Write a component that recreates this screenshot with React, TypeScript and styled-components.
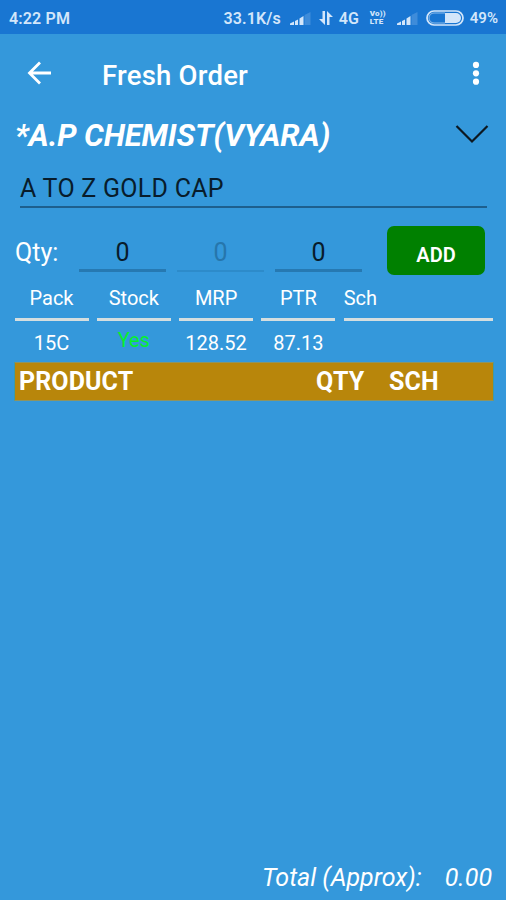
import React from "react";
import styled, { createGlobalStyle } from "styled-components";

const GlobalStyle = createGlobalStyle`
  * { box-sizing: border-box; }
  body { margin: 0; background: #3498db; }
`;

const Screen = styled.main`
  width: 506px;
  height: 900px;
  display: flex;
  flex-direction: column;
  overflow: hidden;
  background: #3498db;
  color: #fff;
  font-family: Roboto, "Liberation Sans", sans-serif;
  white-space: nowrap;
`;

const StatusBar = styled.header`
  height: 34px;
  flex: none;
  display: flex;
  align-items: center;
  padding: 2px 8px 0 9px;
  background: #1976d2;
  color: #d3e6fa;
  font-size: 16px;
  font-weight: 600;
`;

const StatusText = styled.span<{ $gap?: number; $spacing?: number; $size?: number }>`
  margin-left: ${(p) => p.$gap ?? 0}px;
  letter-spacing: ${(p) => p.$spacing ?? 0}px;
  font-size: ${(p) => p.$size ?? 16}px;
`;

const Spacer = styled.div`
  flex: 1;
`;

const StatusIcon = styled.svg<{ $gap: number }>`
  flex: none;
  margin-left: ${(p) => p.$gap}px;
`;

const VolteBadge = styled.span`
  display: flex;
  flex-direction: column;
  width: 17px;
  margin-left: 11px;
  font-size: 8px;
  line-height: 8px;
  font-weight: 900;
  letter-spacing: 0.2px;
`;

const AppBar = styled.div`
  height: 78px;
  flex: none;
  display: flex;
  align-items: center;
  padding: 0 24px 0 27px;
`;

const Title = styled.h1`
  flex: 1;
  margin: 5px 0 0 51px;
  font-size: 27.5px;
  font-weight: 500;
  letter-spacing: 0.22px;
`;

const CustomerRow = styled.div`
  height: 46px;
  flex: none;
  display: flex;
  align-items: center;
  justify-content: space-between;
  padding: 0 17px 0 15px;
`;

const CustomerName = styled.h2`
  margin: 0;
  font-size: 31px;
  font-weight: 700;
  font-style: italic;
  letter-spacing: -0.1px;
`;

const ProductField = styled.div`
  height: 50px;
  flex: none;
  margin: 0 19px 0 20px;
  padding-top: 16px;
  border-bottom: 2px solid #1d5f8e;
  color: #081c2b;
  font-size: 25px;
  line-height: 30px;
  letter-spacing: 0.27px;
`;

const QuantityRow = styled.div`
  height: 71px;
  flex: none;
  display: flex;
  padding: 18px 21px 0 15px;
`;

const QuantityLabel = styled.span`
  width: 64px;
  padding-top: 12px;
  font-size: 25px;
  line-height: 30px;
`;

const QuantityInput = styled.span<{ $muted?: boolean }>`
  width: 87px;
  height: 46px;
  margin-right: 11px;
  padding-top: 12px;
  border-bottom: ${(p) => (p.$muted ? "2px solid #2d8bca" : "3px solid #2679b2")};
  color: ${(p) => (p.$muted ? "#2676ac" : "#081c2b")};
  font-size: 25px;
  line-height: 30px;
  text-align: center;
`;

const AddButton = styled.button`
  width: 98px;
  height: 49px;
  margin-left: auto;
  padding: 8px 0 0;
  border: 0;
  border-radius: 7px;
  background: #008000;
  color: #fff;
  font: 600 20px Roboto, "Liberation Sans", sans-serif;
`;

const DetailGrid = styled.div`
  height: 83px;
  flex: none;
  display: grid;
  grid-template-columns: 74px 74px 74px 74px 149px;
  grid-template-rows: 42px 41px;
  column-gap: 8.3px;
  padding-left: 14.5px;
`;

const DetailHead = styled.div<{ $left?: boolean }>`
  padding-top: 7px;
  border-bottom: 3px solid #d5dedf;
  font-size: 20px;
  line-height: 24px;
  text-align: ${(p) => (p.$left ? "left" : "center")};
`;

const DetailValue = styled.div<{ $available?: boolean }>`
  padding-top: ${(p) => (p.$available ? 7 : 10)}px;
  color: ${(p) => (p.$available ? "#06f02c" : "#fff")};
  font-size: 20px;
  line-height: 24px;
  text-align: center;
`;

const OrderHeader = styled.div`
  height: 39px;
  flex: none;
  display: grid;
  grid-template-columns: 297px 73px 1fr;
  align-items: center;
  margin: 0 12px 0 14px;
  padding-left: 4px;
  border: 1px solid #8d9462;
  border-left-color: #3f9aa5;
  border-right-color: #3f9aa5;
  background: #b8860b;
  font-size: 25px;
  font-weight: 700;
  letter-spacing: 0.1px;
`;

const OrderList = styled.div`
  flex: 1;
`;

const Footer = styled.footer`
  height: 44px;
  flex: none;
  display: flex;
  justify-content: flex-end;
  gap: 23px;
  padding: 7px 14px 0 0;
  font-size: 25px;
  line-height: 30px;
  font-style: italic;
`;

const Signal = ({ gap }: { gap: number }) => (
  <StatusIcon $gap={gap} width="21" height="14" viewBox="0 0 21 14" fill="#d3e6fa">
    <path d="M0 14v-1.500l4-2v3.500zM5 14v-4l3-1.500v5.500zM9.500 14V7.500l4-2.500v9z" />
    <path d="M14.500 14V4l6-3v13z" opacity=".2" />
  </StatusIcon>
);

export default function App() {
  return (
    <>
      <GlobalStyle />
      <Screen>
        <StatusBar>
          <StatusText $spacing={0.15}>4:22 PM</StatusText>
          <Spacer />
          <StatusText $spacing={0.1}>33.1K/s</StatusText>
          <Signal gap={9} />
          <StatusIcon $gap={8} width="14" height="14" viewBox="0 0 14 14" fill="#d3e6fa">
            <path d="M3.5 0H6v14L0 8h3.5zM8 14V0l6 6h-3.5v8z" />
          </StatusIcon>
          <StatusText $gap={6}>4G</StatusText>
          <VolteBadge>
            <span>Vo))</span>
            <span>LTE</span>
          </VolteBadge>
          <Signal gap={10} />
          <StatusIcon $gap={8} width="38" height="16" viewBox="0 0 38 16">
            <rect x="1" y="1" width="36" height="14" rx="7" fill="none" stroke="#d3e6fa" strokeWidth="1.7" />
            <path d="M19 3h11a5 5 0 0 1 0 10H19z" fill="#d3e6fa" />
            <path d="M19 3H8a5 5 0 0 0 0 10h11" fill="none" stroke="#8dbceb" />
          </StatusIcon>
          <StatusText $gap={6} $size={15}>49%</StatusText>
        </StatusBar>

        <AppBar>
          <svg width="24" height="24" viewBox="0 0 24 24" fill="none" stroke="#fff" strokeWidth="2.8">
            <path d="M24 12H3M13 1.5L2.5 12L13 22.5" />
          </svg>
          <Title>Fresh Order</Title>
          <svg width="12" height="26" viewBox="0 0 12 26" fill="#fff">
            <circle cx="6" cy="4.9" r="3.1" />
            <circle cx="6" cy="13.3" r="3.1" />
            <circle cx="6" cy="21.7" r="3.1" />
          </svg>
        </AppBar>

        <CustomerRow>
          <CustomerName>*A.P CHEMIST(VYARA)</CustomerName>
          <svg width="34" height="20" viewBox="0 0 34 20" fill="none" stroke="#0c1821" strokeWidth="2.2">
            <path d="M1.5 1L17 16.5L32.5 1" />
          </svg>
        </CustomerRow>

        <ProductField>A TO Z GOLD CAP</ProductField>

        <QuantityRow>
          <QuantityLabel>Qty:</QuantityLabel>
          <QuantityInput>0</QuantityInput>
          <QuantityInput $muted>0</QuantityInput>
          <QuantityInput>0</QuantityInput>
          <AddButton>ADD</AddButton>
        </QuantityRow>

        <DetailGrid>
          <DetailHead>Pack</DetailHead>
          <DetailHead>Stock</DetailHead>
          <DetailHead>MRP</DetailHead>
          <DetailHead>PTR</DetailHead>
          <DetailHead $left>Sch</DetailHead>
          <DetailValue>15C</DetailValue>
          <DetailValue $available>Yes</DetailValue>
          <DetailValue>128.52</DetailValue>
          <DetailValue>87.13</DetailValue>
        </DetailGrid>

        <OrderHeader>
          <span>PRODUCT</span>
          <span>QTY</span>
          <span>SCH</span>
        </OrderHeader>
        <OrderList />
        <Footer>
          <span>Total (Approx):</span>
          <span>0.00</span>
        </Footer>
      </Screen>
    </>
  );
}
